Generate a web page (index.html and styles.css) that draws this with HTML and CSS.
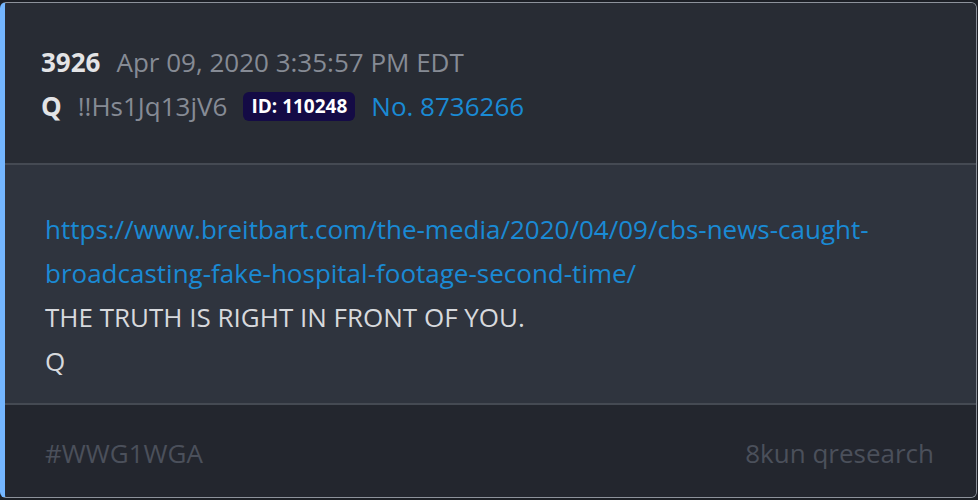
FILE: index.html
```html
<!DOCTYPE html>
<html>
<head>
  <meta charset="utf-8">
  <title>Q drop 3926</title>
  <link rel="stylesheet" href="styles.css">
</head>
<body>
  <div class="post">
    <div class="post-head">
      <div class="row">
        <span class="num">3926</span>
        <span class="muted">Apr 09, 2020 3:35:57 PM EDT</span>
      </div>
      <div class="row">
        <span class="num">Q</span>
        <span class="muted">!!Hs1Jq13jV6</span>
        <span class="badge">ID: 110248</span>
        <a class="link" href="#">No. 8736266</a>
      </div>
    </div>
    <div class="post-body">
      <a class="link" href="#">https://www.breitbart.com/the-media/2020/04/09/cbs-news-caught-broadcasting-fake-hospital-footage-second-time/</a>
      <p>THE TRUTH IS RIGHT IN FRONT OF YOU.</p>
      <p>Q</p>
    </div>
    <div class="post-foot">
      <span>#WWG1WGA</span>
      <span>8kun qresearch</span>
    </div>
  </div>
</body>
</html>
```

FILE: styles.css
```css
/* Base */
* {
  box-sizing: border-box;
  margin: 0;
  padding: 0;
}
html, body {
  background: #1c1f25;
}
body {
  font-family: "Open Sans", "Noto Sans", sans-serif;
  font-size: 26px;
  line-height: 44px;
  color: #d7d9dd;
  padding: 2px 1px 2px 0;
}

/* Card */
.post {
  height: 496px;
  display: flex;
  flex-direction: column;
  border: 1px solid #8d929b;
  border-left: 5px solid #74b6ff;
  border-radius: 6px;
  overflow: hidden;
  background: #2f343e;
}
.post-head {
  background: #282c34;
  padding: 37px 36px 35px;
  border-bottom: 2px solid #454a53;
}
.row {
  display: flex;
  align-items: center;
  gap: 16px;
}
.num {
  font-weight: 700;
  color: #e3e4e6;
}
.muted {
  color: #868b95;
}
.badge {
  background: #140b45;
  color: #fff;
  font-size: 19px;
  font-weight: 700;
  line-height: 29px;
  padding: 0 8px;
  border-radius: 6px;
}
.link {
  color: #1a8ad4;
  text-decoration: none;
}
.post-body {
  flex: 1;
  padding: 42px 40px 0;
  border-bottom: 2px solid #454a53;
}
.post-foot {
  background: #23262e;
  height: 92px;
  padding: 4px 42px 0 40px;
  display: flex;
  justify-content: space-between;
  align-items: center;
  color: #4b505b;
}
```
